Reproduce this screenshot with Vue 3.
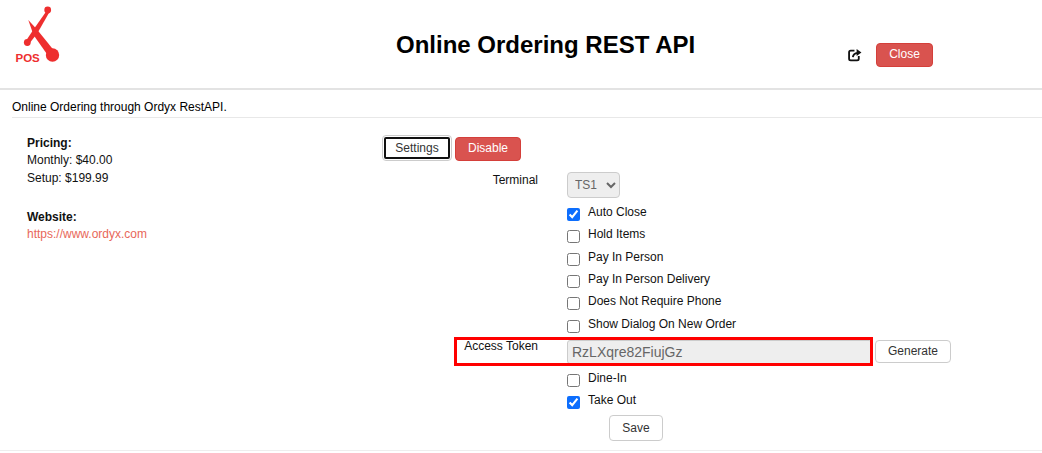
<script setup>
const before = [
  { label: 'Auto Close', checked: true },
  { label: 'Hold Items', checked: false },
  { label: 'Pay In Person', checked: false },
  { label: 'Pay In Person Delivery', checked: false },
  { label: 'Does Not Require Phone', checked: false },
  { label: 'Show Dialog On New Order', checked: false },
]
const after = [
  { label: 'Dine-In', checked: false },
  { label: 'Take Out', checked: true },
]
</script>

<template>
  <div class="page">
    <header class="header">
      <svg class="logo" width="70" height="70" viewBox="0 0 70 70">
        <path d="M28.300 20 L37 29.500 L55.800 52.700 L49.200 57.300 L33.500 35 Z" fill="#ee2e2e" />
        <path d="M46.500 11 L49.200 12.600 L37.500 33 L29 44 L25.500 41.500 L33.500 29.500 Z" fill="#ee2e2e" />
        <circle cx="47.700" cy="10" r="3.400" fill="#ee2e2e" />
        <circle cx="27.300" cy="42.500" r="3.400" fill="#ee2e2e" />
        <circle cx="52.500" cy="55" r="6.700" fill="#ee2e2e" />
        <text x="15.500" y="62" class="pos">POS</text>
      </svg>
      <h1 class="title">Online Ordering REST API</h1>
      <svg class="ext" width="14" height="14" viewBox="0 0 13 13" fill="none" stroke="#111" stroke-width="1.700">
        <path d="M6 2.500 H2.500 Q1 2.500 1 4 V10 Q1 11.500 2.500 11.500 H8.500 Q10 11.500 10 10 V7.500" />
        <path d="M4.500 8.500 Q5 5 9 4.500" />
        <path d="M8 1 L12.500 4.200 L8 7.500 Z" fill="#111" stroke="none" />
      </svg>
      <button class="btn danger close">Close</button>
    </header>

    <p class="desc">Online Ordering through Ordyx RestAPI.</p>

    <main class="body">
      <section class="info">
        <div class="info-block">
          <strong>Pricing:</strong>
          <div>Monthly: $40.00</div>
          <div>Setup: $199.99</div>
        </div>
        <div class="info-block">
          <strong>Website:</strong>
          <div class="link">https://www.ordyx.com</div>
        </div>
      </section>

      <section class="config">
        <div class="actions">
          <button class="btn focus">Settings</button>
          <button class="btn danger">Disable</button>
        </div>

        <div class="form">
          <div class="row terminal">
            <label class="lbl">Terminal</label>
            <select class="sel" disabled><option>TS1</option></select>
          </div>

          <div v-for="c in before" :key="c.label" class="row check">
            <span></span>
            <label class="chk"><input type="checkbox" :checked="c.checked" /><span>{{ c.label }}</span></label>
          </div>

          <div class="row token">
            <label class="lbl">Access Token</label>
            <input class="tok" disabled value="RzLXqre82FiujGz" />
            <button class="btn gen">Generate</button>
            <div class="highlight"></div>
          </div>

          <div v-for="c in after" :key="c.label" class="row check after">
            <span></span>
            <label class="chk"><input type="checkbox" :checked="c.checked" /><span>{{ c.label }}</span></label>
          </div>

          <div class="row save">
            <span></span>
            <button class="btn savebtn">Save</button>
          </div>
        </div>
      </section>
    </main>
  </div>
</template>

<style>
html, body { margin: 0; background: #fff; }
</style>

<style scoped>
.page {
  width: 1042px;
  height: 453px;
  overflow: hidden;
  font-family: "Liberation Sans", Arial, sans-serif;
  font-size: 12px;
  color: #111;
  box-sizing: border-box;
}
.header {
  height: 88px;
  border-bottom: 2px solid #e3e3e3;
  display: flex;
  align-items: flex-start;
}
.logo { flex: none; }
.pos { font: bold 11.500px "Liberation Sans", Arial, sans-serif; fill: #ee2e2e; }
.title {
  margin: 31px 0 0 326px;
  width: 299px;
  font-size: 24px;
  line-height: 28px;
  font-weight: 700;
  color: #000;
  white-space: nowrap;
}
.ext { margin: 48px 0 0 153px; flex: none; }
.close { margin: 43px 0 0 14px; width: 57px; height: 24px; }
.btn {
  font-family: inherit;
  font-size: 12px;
  line-height: 16px;
  border: 1px solid #ccc;
  border-radius: 4px;
  background: #fff;
  color: #333;
  padding: 0;
  box-sizing: border-box;
}
.btn.danger { background: #d9534f; border-color: #d43f3a; color: #fff; padding-bottom: 2px; }
.desc {
  margin: 0 0 0 12px;
  height: 27px;
  line-height: 35px;
  border-bottom: 1px solid #e8e8e8;
  color: #000;
}
.body {
  display: flex;
  align-items: flex-start;
  height: 332px;
  border-bottom: 1px solid #eee;
}
.info { width: 382px; padding: 18px 0 0 27px; box-sizing: border-box; line-height: 18px; flex: none; }
.info-block { margin-bottom: 23px; }
.info-block strong { display: block; color: #111; line-height: 15px; }
.link { color: #e8685a; }
.config { flex: 1; padding-top: 17px; }
.actions { display: flex; gap: 3px; align-items: flex-start; }
.focus { width: 70px; height: 26px; outline: 2px solid #111; outline-offset: -4px; }
.actions .danger { width: 66px; height: 24px; margin: 2px 0 0 0; }
.form { margin-top: 11px; }
.row {
  display: grid;
  justify-content: start;
  position: relative;
}
.lbl { text-align: right; line-height: 16px; color: #111; width: 156px; box-sizing: border-box; }
.terminal { height: 28px; margin-bottom: 4.100px; grid-template-columns: 185px auto; }
.sel {
  width: 53px;
  height: 26px;
  font: 12px "Liberation Sans", Arial, sans-serif;
  border: 1px solid #ccc;
  border-radius: 4px;
  background-color: #eee;
  color: #666;
  opacity: 1;
  padding-left: 3px;
}
.check { height: 22.300px; grid-template-columns: 185px auto; }
.check.after { height: 22px; }
.chk { display: flex; align-items: flex-start; gap: 8px; line-height: 16px; color: #111; }
.chk input { width: 13px; height: 13px; margin: 4px 0 0 0; accent-color: #0d6efd; }
.token {
  height: 28px;
  grid-template-columns: 185px 305px auto;
  margin: -0.900px 0 5px;
}
.token .lbl { margin-top: 1px; }
.tok {
  width: 305px;
  height: 24px;
  box-sizing: border-box;
  margin-top: 3px;
  border: 1px solid #ccc;
  border-radius: 3px;
  background: #eee;
  color: #666;
  font: 14px "Liberation Sans", Arial, sans-serif;
  padding: 0 4px;
}
.gen { width: 76px; height: 23px; margin-top: 3px; margin-left: 3px; }
.highlight {
  position: absolute;
  left: 72px;
  top: 0;
  width: 419px;
  height: 29px;
  border: 3px solid #f00;
  box-sizing: border-box;
  pointer-events: none;
}
.save { height: 26px; margin-top: 0.600px; grid-template-columns: 227px auto; }
.savebtn { width: 54px; height: 26px; }
</style>
